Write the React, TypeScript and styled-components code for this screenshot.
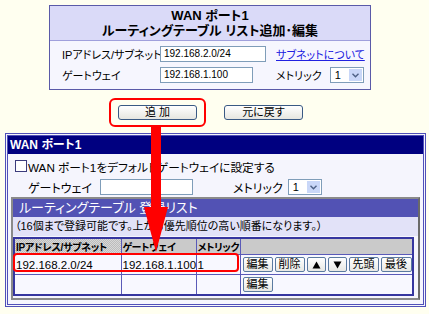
import React from "react";
import styled, { createGlobalStyle } from "styled-components";

const Global = createGlobalStyle`
  html, body { margin: 0; padding: 0; background: #fffff0; }
  body {
    font-family: "Liberation Sans", "Noto Sans CJK JP", sans-serif;
    font-size: 11px;
    color: #000;
    font-feature-settings: "palt" 1;
  }
  #root { position: relative; width: 429px; height: 314px; overflow: hidden; }
`;

const Page = styled.div`
  position: relative;
  padding-top: 5px;
`;

const TopPanel = styled.div`
  margin-left: 49px;
  width: 322px;
  box-sizing: border-box;
  border: 1px solid #5a5aa8;
  background: #f6f6fe;
`;

const TopHeader = styled.div`
  height: 34px;
  background: #dadaf8;
  border-bottom: 1px solid #a0a0dc;
  display: flex;
  flex-direction: column;
  align-items: center;
  justify-content: center;
  font-weight: bold;
  font-size: 13px;
  line-height: 15px;
`;

const FormGrid = styled.div`
  display: grid;
  grid-template-columns: 98px 116px auto;
  row-gap: 5px;
  padding: 5px 0 6px 12px;
  align-items: center;
`;

const Label = styled.span`
  white-space: nowrap;
`;

const TextBox = styled.div<{ $w: number }>`
  width: ${(p) => p.$w}px;
  height: 16px;
  box-sizing: border-box;
  border: 1px solid #7f9db9;
  background: #fff;
  font-size: 10px;
  line-height: 14px;
  padding-left: 3px;
`;

const Link = styled.a`
  color: #2020e0;
  text-decoration: underline;
  white-space: nowrap;
`;

const MetricGroup = styled.div<{ $gap: number; $offset?: number }>`
  display: flex;
  align-items: center;
  gap: ${(p) => p.$gap}px;
  margin-left: ${(p) => p.$offset ?? 0}px;
`;

const SelectBox = styled.div`
  width: 34px;
  height: 16px;
  box-sizing: border-box;
  border: 1px solid #7f9db9;
  background: #fff;
  display: flex;
  align-items: center;
  justify-content: space-between;
  padding: 1px;
  font-size: 11px;
`;

const SelectValue = styled.span`
  padding-left: 3px;
  line-height: 12px;
`;

const SelectArrow = styled.span`
  width: 13px;
  height: 12px;
  background: #c9d7f8;
  display: flex;
  align-items: center;
  justify-content: center;
`;

const ButtonRow = styled.div`
  display: flex;
  align-items: center;
  margin: 8px 0 0 109px;
  gap: 18px;
`;

const Highlight = styled.div`
  border: 2px solid #ff0000;
  border-radius: 6px;
  padding: 5px 7px;
`;

const PushButton = styled.div`
  width: 79px;
  height: 15px;
  box-sizing: border-box;
  border: 1px solid #3a5a84;
  border-radius: 3px;
  background: linear-gradient(#ffffff, #e6e6e0);
  display: flex;
  align-items: center;
  justify-content: center;
  font-size: 11px;
  line-height: 13px;
`;

const MainPanel = styled.div`
  margin: 6px 3px 0 5px;
  height: 174px;
  box-sizing: border-box;
  border: 3px double #5050b8;
  background: #f5f5fd;
  font-size: 12px;
`;

const TitleBar = styled.div`
  height: 18px;
  background: #000080;
  color: #fff;
  font-weight: bold;
  font-size: 12px;
  line-height: 18px;
  padding-left: 2px;
`;

const Body = styled.div`
  padding: 0 3px;
`;

const CheckRow = styled.div`
  display: flex;
  align-items: center;
  height: 16px;
  margin: 4px 0 0 4px;
  gap: 1px;
  font-size: 11.7px;
`;

const CheckBox = styled.span`
  width: 10px;
  height: 10px;
  border: 1px solid #3c3c7c;
  background: #fff;
`;

const GatewayRow = styled.div`
  display: flex;
  align-items: center;
  height: 16px;
  margin: 5px 0 0 17px;
`;

const GwLabel = styled.span`
  width: 72px;
`;

const SubPanel = styled.div`
  margin-top: 2px;
  border: 2px solid #8a8a8a;
  border-right-color: #6a6a6a;
  background: #f5f5fd;
`;

const SubHeader = styled.div`
  height: 18px;
  background: #5252b4;
  color: #fff;
  font-size: 13px;
  line-height: 18px;
  padding-left: 6px;
`;

const Note = styled.div`
  height: 19px;
  background: #e2e2f8;
  font-size: 11px;
  line-height: 19px;
  padding-left: 2px;
`;

const TableWrap = styled.div`
  position: relative;
  padding: 1px 2px 2px 0;
`;

const Table = styled.table`
  border-collapse: collapse;
  table-layout: fixed;
  width: 401px;
  border: 2px solid #3636a0;
  font-size: 11.5px;
`;

const Th = styled.th`
  height: 14px;
  padding: 0 0 0 1px;
  border: 1px solid #5a5ab8;
  background: repeating-conic-gradient(#bcbcbc 0 25%, #d8d8d8 0 50%) 0 0 / 2px 2px;
  font-size: 10px;
  letter-spacing: -0.3px;
  font-weight: bold;
  text-align: left;
  white-space: nowrap;
`;

const Td = styled.td`
  height: 19px;
  padding: 0 1px;
  border: 1px solid #5a5ab8;
  background: #f8f8ff;
  white-space: nowrap;
  overflow: hidden;
`;

const Actions = styled.div`
  display: flex;
  gap: 2px;
  padding-left: 1px;
`;

const SmallButton = styled.div<{ $w: number }>`
  width: ${(p) => p.$w}px;
  height: 15px;
  box-sizing: border-box;
  border: 1px solid #5a7aa0;
  border-radius: 2px;
  background: linear-gradient(#ffffff, #e8e8e4);
  display: flex;
  align-items: center;
  justify-content: center;
  font-size: 11px;
  line-height: 13px;
  flex-shrink: 0;
`;

const RowMark = styled.div`
  position: absolute;
  left: 0;
  top: 17px;
  width: 226px;
  height: 19px;
  box-sizing: border-box;
  border: 2px solid #ff0000;
  border-radius: 4px;
  pointer-events: none;
`;

const Arrow = styled.svg`
  position: absolute;
  left: 0;
  top: 0;
  pointer-events: none;
`;

const Chevron = () => (
  <svg width="7" height="5" viewBox="0 0 7 5">
    <path d="M0.5 0.8 L3.5 3.8 L6.5 0.8" fill="none" stroke="#4d6185" strokeWidth="1.4" />
  </svg>
);

const Select = () => (
  <SelectBox>
    <SelectValue>1</SelectValue>
    <SelectArrow>
      <Chevron />
    </SelectArrow>
  </SelectBox>
);

const Tri = ({ up }: { up: boolean }) => (
  <svg width="9" height="8" viewBox="0 0 9 8">
    <path d={up ? "M4.5 0.5 L8.5 7.5 L0.5 7.5 Z" : "M0.5 0.5 L8.5 0.5 L4.5 7.5 Z"} fill="#000" />
  </svg>
);

export default function App() {
  return (
    <Page>
      <Global />
      <TopPanel>
        <TopHeader>
          <span>WAN ポート1</span>
          <span>ルーティングテーブル リスト追加･編集</span>
        </TopHeader>
        <FormGrid>
          <Label>IPアドレス/サブネット</Label>
          <TextBox $w={106}>192.168.2.0/24</TextBox>
          <Link>サブネットについて</Link>
          <Label>ゲートウェイ</Label>
          <TextBox $w={93}>192.168.1.100</TextBox>
          <MetricGroup $gap={8}>
            <Label>メトリック</Label>
            <Select />
          </MetricGroup>
        </FormGrid>
      </TopPanel>

      <ButtonRow>
        <Highlight>
          <PushButton>追 加</PushButton>
        </Highlight>
        <PushButton>元に戻す</PushButton>
      </ButtonRow>

      <MainPanel>
        <TitleBar>WAN ポート1</TitleBar>
        <Body>
          <CheckRow>
            <CheckBox />
            <span>WAN ポート1をデフォルトゲートウェイに設定する</span>
          </CheckRow>
          <GatewayRow>
            <GwLabel>ゲートウェイ</GwLabel>
            <TextBox $w={93} />
            <MetricGroup $gap={5} $offset={40}>
              <span>メトリック</span>
              <Select />
            </MetricGroup>
          </GatewayRow>
          <SubPanel>
            <SubHeader>ルーティングテーブル 登録リスト</SubHeader>
            <Note>（16個まで登録可能です。上から優先順位の高い順番になります。）</Note>
            <TableWrap>
              <Table>
                <colgroup>
                  <col style={{ width: 107 }} />
                  <col style={{ width: 75 }} />
                  <col style={{ width: 44 }} />
                  <col />
                </colgroup>
                <thead>
                  <tr>
                    <Th>IPアドレス/サブネット</Th>
                    <Th>ゲートウェイ</Th>
                    <Th>メトリック</Th>
                    <Th />
                  </tr>
                </thead>
                <tbody>
                  <tr>
                    <Td>192.168.2.0/24</Td>
                    <Td>192.168.1.100</Td>
                    <Td>1</Td>
                    <Td>
                      <Actions>
                        <SmallButton $w={30}>編集</SmallButton>
                        <SmallButton $w={30}>削除</SmallButton>
                        <SmallButton $w={19}><Tri up /></SmallButton>
                        <SmallButton $w={19}><Tri up={false} /></SmallButton>
                        <SmallButton $w={30}>先頭</SmallButton>
                        <SmallButton $w={31}>最後</SmallButton>
                      </Actions>
                    </Td>
                  </tr>
                  <tr>
                    <Td />
                    <Td />
                    <Td />
                    <Td>
                      <Actions>
                        <SmallButton $w={30}>編集</SmallButton>
                      </Actions>
                    </Td>
                  </tr>
                </tbody>
              </Table>
              <RowMark />
            </TableWrap>
          </SubPanel>
        </Body>
      </MainPanel>

      <Arrow width="429" height="314" viewBox="0 0 429 314">
        <rect x="151" y="126" width="10" height="82" fill="#ff0000" />
        <polygon points="144,207 168,207 156,252" fill="#ff0000" />
      </Arrow>
    </Page>
  );
}
